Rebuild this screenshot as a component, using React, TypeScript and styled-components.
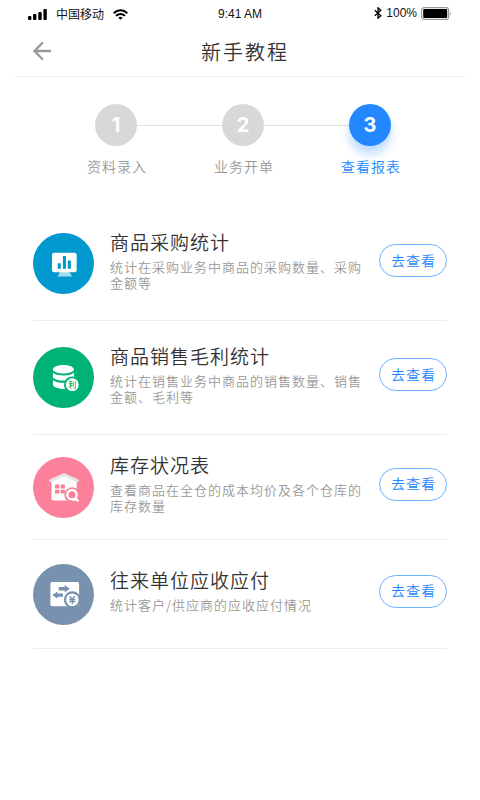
import React from "react";
import styled, { createGlobalStyle } from "styled-components";

const GlobalStyle = createGlobalStyle`
  *, *::before, *::after { box-sizing: border-box; }
  body {
    margin: 0;
    background: #fff;
    font-family: "Noto Sans CJK SC", "Noto Sans", sans-serif;
    font-weight: 350;
  }
  h1, h2, p, ol, ul { margin: 0; padding: 0; font-weight: inherit; }
  ol, ul { list-style: none; }
`;

const Screen = styled.main`
  min-height: 100vh;
  background: #fff;
`;

const StatusBar = styled.div`
  display: grid;
  grid-template-columns: 1fr auto 1fr;
  align-items: center;
  height: 28px;
  padding: 0 28px;
  font-size: 12px;
  line-height: 16px;
  font-weight: 400;
  color: #111;
`;

const StatusGroup = styled.div<{ $end?: boolean }>`
  display: flex;
  align-items: center;
  justify-content: ${(p) => (p.$end ? "flex-end" : "flex-start")};
  gap: ${(p) => (p.$end ? "4px" : "8px")};
  padding-bottom: ${(p) => (p.$end ? "2px" : "0")};
`;

const StatusText = styled.span`
  font-family: "Liberation Sans", Arial, sans-serif;
`;

const Carrier = styled.span`
  font-size: 12px;
  padding: 0 1px;
`;

const Header = styled.header`
  display: grid;
  grid-template-columns: 32px 1fr 24px;
  align-items: center;
  height: 49px;
  margin: 0 15px;
  padding: 0 8px 0 10px;
  border-bottom: 1px solid #ececec;
`;

const BackButton = styled.button`
  display: flex;
  align-items: center;
  justify-content: center;
  width: 32px;
  height: 32px;
  padding: 0 0 2px 2px;
  border: 0;
  background: none;
  color: #999;
  cursor: pointer;
`;

const PageTitle = styled.h1`
  font-size: 20px;
  line-height: 28px;
  letter-spacing: 2px;
  text-align: center;
  color: #333;
`;

const Steps = styled.ol`
  display: flex;
  padding: 27px 79px 0 87px;
`;

const Step = styled.li<{ $active?: boolean }>`
  flex: 1;
  color: ${(p) => (p.$active ? "#2388ff" : "#999")};

  &:last-child { flex: none; }
`;

const StepTrack = styled.div`
  display: flex;
  align-items: center;
  margin: 0 -8px 0 8px;
`;

const StepNumber = styled.span<{ $active?: boolean }>`
  display: flex;
  align-items: center;
  justify-content: center;
  width: 42px;
  height: 42px;
  border-radius: 50%;
  background: ${(p) => (p.$active ? "#2388ff" : "#d8d8d8")};
  box-shadow: ${(p) => (p.$active ? "0 8px 10px rgba(35, 136, 255, 0.3)" : "none")};
  font-family: Inter, "Liberation Sans", sans-serif;
  font-size: 20px;
  font-weight: 700;
  color: #fff;
`;

const StepLine = styled.span`
  flex: 1;
  height: 1px;
  background: #dfe1e0;
`;

const StepLabel = styled.span`
  display: block;
  margin-top: 10px;
  font-size: 14px;
  line-height: 20px;
  letter-spacing: 1px;
  white-space: nowrap;
`;

const ReportList = styled.ul`
  margin-top: 31px;
  padding: 0 33px;
`;

const Report = styled.li<{ $height: number }>`
  display: flex;
  align-items: center;
  min-height: ${(p) => p.$height}px;
  border-bottom: 1px solid #ececec;
`;

const ReportIcon = styled.svg`
  flex: none;
  width: 61px;
  height: 61px;
`;

const ReportText = styled.div`
  flex: 1;
  min-width: 0;
  padding: 0 16px 7px;
`;

const ReportTitle = styled.h2`
  font-size: 19px;
  line-height: 24px;
  letter-spacing: 1px;
  color: #333;
`;

const ReportDescription = styled.p`
  margin-top: 5px;
  font-size: 13px;
  line-height: 16px;
  letter-spacing: 1px;
  color: #999;
`;

const ViewButton = styled.button`
  flex: none;
  width: 68px;
  height: 33px;
  margin-bottom: 6px;
  padding: 0 0 2px 1px;
  border: 1px solid #6eb0ff;
  border-radius: 17px;
  background: #fff;
  font-family: inherit;
  font-size: 14px;
  font-weight: inherit;
  line-height: 20px;
  letter-spacing: 1px;
  color: #2388ff;
  cursor: pointer;
`;

const SalesGlyph = styled.text`
  font-family: "Noto Sans CJK SC", sans-serif;
  font-size: 8px;
  font-weight: 500;
`;

const PurchaseIcon = () => (
  <ReportIcon viewBox="0 0 61 61" aria-hidden="true">
    <circle cx="30.5" cy="30.5" r="30.5" fill="#0099cf" />
    <path d="M27 39h9.500L39 43.500H24.500Z" fill="#a6dbef" />
    <rect x="19" y="19.700" width="24.700" height="19.600" rx="2.200" fill="#fff" />
    <g fill="#0099cf">
      <rect x="24.700" y="30.300" width="3.100" height="5.500" rx=".5" />
      <rect x="29.900" y="23" width="3.100" height="12.800" rx=".5" />
      <rect x="34.800" y="27.400" width="3.100" height="8.400" rx=".5" />
    </g>
  </ReportIcon>
);

const SalesIcon = () => (
  <ReportIcon viewBox="0 0 61 61" aria-hidden="true">
    <circle cx="30.500" cy="30.500" r="30.500" fill="#00b276" />
    <g fill="#fff">
      <ellipse cx="30.400" cy="22.300" rx="10.500" ry="4.300" />
      <path d="M19.900 25.400c2.300 2.400 6.100 3 10.500 3s8.200-.6 10.500-3v5c-2.300 2.500-6.100 3.200-10.500 3.200s-8.200-.7-10.500-3.200Z" />
      <path d="M19.900 33c2.300 2.200 6.100 2.800 10.500 2.800s8.200-.6 10.500-2.800v5.300c-2.300 2.500-6.100 3.700-10.500 3.700s-8.200-1.200-10.500-3.700Z" />
    </g>
    <circle cx="39.300" cy="37.700" r="8.300" fill="#00b276" />
    <circle cx="39.300" cy="37.700" r="6.400" fill="#fff" />
    <SalesGlyph x="39.300" y="40.700" textAnchor="middle" fill="#00b276">利</SalesGlyph>
  </ReportIcon>
);

const StockIcon = () => (
  <ReportIcon viewBox="0 0 61 61" aria-hidden="true">
    <circle cx="30.500" cy="30.500" r="30.500" fill="#fb819b" />
    <path d="M18.500 23 31 18l12.700 5v18.500a2 2 0 0 1-2 2H20.500a2 2 0 0 1-2-2Z" fill="#fff" />
    <path d="m31 16 14.400 6.600q.8.500.3 1.600t-1.700.7L31 19.500l-13 5.400q-1.200.4-1.700-.7t.3-1.600Z" fill="#e8e4e5" />
    <g fill="#fb819b">
      <rect x="22" y="27.500" width="4.300" height="4" rx=".6" />
      <rect x="27.600" y="27.500" width="4.300" height="4" rx=".6" />
      <rect x="22" y="32.700" width="4.300" height="3.800" rx=".6" />
      <rect x="27.600" y="32.700" width="4.300" height="3.800" rx=".6" />
      <circle cx="39.200" cy="38" r="7.800" />
    </g>
    <circle cx="39" cy="37.700" r="4.700" fill="none" stroke="#fff" strokeWidth="2.300" />
    <path d="M39.600 42.700h4.600M42.700 41.500l2.200 2.400" fill="none" stroke="#fff" strokeWidth="2" strokeLinecap="round" />
  </ReportIcon>
);

const ReceivableIcon = () => (
  <ReportIcon viewBox="0 0 61 61" aria-hidden="true">
    <circle cx="30.500" cy="30.500" r="30.500" fill="#7791af" />
    <rect x="17.400" y="18" width="28.700" height="24.200" rx="1.800" fill="#fff" />
    <g fill="#7791af">
      <path d="M25.700 23h6v-2l5 3.700-5 3.700v-2h-6Z" />
      <path d="M30 29.400h-5.600v-2l-5 3.700 5 3.700v-2H30Z" />
      <circle cx="39.300" cy="35.700" r="8.400" />
    </g>
    <circle cx="39.300" cy="35.700" r="6.300" fill="#fff" />
    <path
      d="m36.700 32.200 2.600 3 2.600-3M36.300 35.500h6M36.300 37.500h6M39.300 35v5"
      fill="none"
      stroke="#7791af"
      strokeWidth="1.300"
    />
  </ReportIcon>
);

const SignalIcon = () => (
  <svg width="19" height="11" viewBox="0 0 19 11" aria-hidden="true">
    <rect x="0" y="7" width="3.400" height="4" rx="1" />
    <rect x="5" y="5" width="3.400" height="6" rx="1" />
    <rect x="10.300" y="3" width="3.400" height="8" rx="1" />
    <rect x="15.400" y="0" width="3.400" height="11" rx="1" />
  </svg>
);

const WifiIcon = () => (
  <svg width="15" height="11" viewBox="0 0 15 11" fill="none" stroke="#000" strokeWidth="2" aria-hidden="true">
    <path d="M.6 4.200a9.800 9.800 0 0 1 13.800 0" />
    <path d="M3 6.900a6.400 6.400 0 0 1 9 0" />
    <path d="M7.500 10.800 5.300 8.700a3.200 3.200 0 0 1 4.400 0Z" fill="#000" stroke="none" />
  </svg>
);

const BluetoothIcon = () => (
  <svg width="8" height="12" viewBox="0 0 8 12" fill="none" stroke="#000" strokeWidth="1.300" aria-hidden="true">
    <path d="m.8 3.200 6 5.600L4 11.200V.8l2.800 2.400-6 5.600" />
  </svg>
);

const BatteryIcon = () => (
  <svg width="31" height="13" viewBox="0 0 31 13" aria-hidden="true">
    <rect x=".6" y=".6" width="27" height="11.800" rx="2.500" fill="#fff" stroke="#999" strokeWidth="1.200" />
    <rect x="2.200" y="2" width="24" height="9" rx="1" fill="#000" />
    <path d="M29 4.500q1.500 2 0 4Z" fill="#999" />
  </svg>
);

const BackIcon = () => (
  <svg width="20" height="20" viewBox="0 0 20 20" fill="none" stroke="currentColor" strokeWidth="2.400" aria-hidden="true">
    <path d="M10.800 1.500 2.500 10l8.300 8.500M2.500 10H19" />
  </svg>
);

const steps = ["资料录入", "业务开单", "查看报表"];
const activeStep = 2;

const reports = [
  {
    title: "商品采购统计",
    description: "统计在采购业务中商品的采购数量、采购金额等",
    Icon: PurchaseIcon,
    height: 114,
  },
  {
    title: "商品销售毛利统计",
    description: "统计在销售业务中商品的销售数量、销售金额、毛利等",
    Icon: SalesIcon,
    height: 114,
  },
  {
    title: "库存状况表",
    description: "查看商品在全仓的成本均价及各个仓库的库存数量",
    Icon: StockIcon,
    height: 105,
  },
  {
    title: "往来单位应收应付",
    description: "统计客户/供应商的应收应付情况",
    Icon: ReceivableIcon,
    height: 109,
  },
];

export default function App() {
  return (
    <>
      <GlobalStyle />
      <Screen lang="zh-CN">
        <StatusBar>
          <StatusGroup>
            <SignalIcon />
            <Carrier>中国移动</Carrier>
            <WifiIcon />
          </StatusGroup>
          <StatusText>9:41 AM</StatusText>
          <StatusGroup $end>
            <BluetoothIcon />
            <StatusText>100%</StatusText>
            <BatteryIcon />
          </StatusGroup>
        </StatusBar>
        <Header>
          <BackButton type="button" aria-label="返回">
            <BackIcon />
          </BackButton>
          <PageTitle>新手教程</PageTitle>
        </Header>
        <Steps>
          {steps.map((label, index) => {
            const active = index === activeStep;
            return (
              <Step key={label} $active={active} aria-current={active ? "step" : undefined}>
                <StepTrack>
                  <StepNumber $active={active}>{index + 1}</StepNumber>
                  {index < steps.length - 1 && <StepLine />}
                </StepTrack>
                <StepLabel>{label}</StepLabel>
              </Step>
            );
          })}
        </Steps>
        <ReportList>
          {reports.map(({ title, description, Icon, height }) => (
            <Report key={title} $height={height}>
              <Icon />
              <ReportText>
                <ReportTitle>{title}</ReportTitle>
                <ReportDescription>{description}</ReportDescription>
              </ReportText>
              <ViewButton type="button" aria-label={`去查看 ${title}`}>
                去查看
              </ViewButton>
            </Report>
          ))}
        </ReportList>
      </Screen>
    </>
  );
}
